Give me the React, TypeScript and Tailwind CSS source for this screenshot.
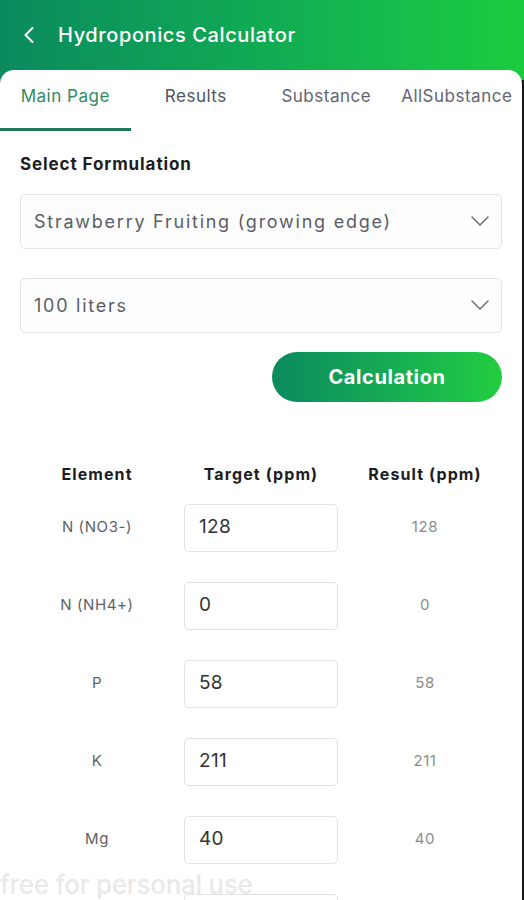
import React from 'react';
import { ChevronLeft, ChevronDown } from 'lucide-react';

const tabs = ['Main Page', 'Results', 'Substance', 'AllSubstance'];

const rows = [
  { name: 'N (NO3-)', target: '128', result: '128' },
  { name: 'N (NH4+)', target: '0', result: '0' },
  { name: 'P', target: '58', result: '58' },
  { name: 'K', target: '211', result: '211' },
  { name: 'Mg', target: '40', result: '40' },
  { name: '', target: '', result: '' },
];

const Select: React.FC<{ value: string }> = ({ value }) => (
  <div className="flex items-center justify-between h-[55px] pl-[13px] pr-[5px] border border-[#e2e4e8] rounded-[5px] bg-[#fdfdfd]">
    <span className="text-[18px] text-[#5a5d66] tracking-[1.75px]">{value}</span>
    <ChevronDown size={32} strokeWidth={1.1} className="text-[#6b6e76]" />
  </div>
);

export default function App() {
  return (
    <div
      className="relative h-[900px] overflow-hidden bg-[#161616]"
      style={{ fontFamily: 'Inter, "Open Sans", sans-serif' }}
    >
      <div className="h-[80px] bg-gradient-to-r from-[#0b8a5d] to-[#1bcd3d] flex items-start pt-[21px] pl-[15px] gap-[15px]">
        <ChevronLeft size={28} strokeWidth={1.7} className="text-white" />
        <span className="text-white text-[20px] font-medium tracking-[0.6px] leading-[28px]">Hydroponics Calculator</span>
      </div>

      <div className="-mt-[10px] mr-[2px] bg-white rounded-t-[14px] h-[840px]">
        <div className="grid grid-cols-4 h-[61px]">
          {tabs.map((t, i) => (
            <div key={t} className="flex flex-col">
              <div
                className={`flex-1 flex items-center justify-center pb-[4px] text-[17px] tracking-[0.5px] ${
                  i === 0 ? 'text-[#2d8c66]' : i === 1 ? 'text-[#4f5566]' : 'text-[#62656f]'
                }`}
              >
                {t}
              </div>
              <div className={`h-[3px] ${i === 0 ? 'bg-[#1a7b56]' : 'bg-transparent'}`} />
            </div>
          ))}
        </div>

        <div className="px-[20px]">
          <div className="mt-[21px] text-[17px] font-bold text-[#1d1d1f] tracking-[0.9px]">Select Formulation</div>
          <div className="mt-[16px]">
            <Select value="Strawberry Fruiting (growing edge)" />
          </div>
          <div className="mt-[29px]">
            <Select value="100 liters" />
          </div>
          <div className="mt-[19px] flex justify-end">
            <button className="w-[230px] h-[50px] rounded-full bg-gradient-to-r from-[#0b8a5d] to-[#22cd3e] text-white text-[20px] font-bold tracking-[0.6px]">
              Calculation
            </button>
          </div>

          <div className="mt-[60px] grid grid-cols-[154px_1fr_154px] text-[16px] font-bold text-[#1d1d1f] text-center tracking-[1.1px]">
            <div>Element</div>
            <div>Target (ppm)</div>
            <div>Result (ppm)</div>
          </div>

          <div className="mt-[18px] flex flex-col gap-[30px]">
            {rows.map((r, i) => (
              <div key={i} className="grid grid-cols-[154px_1fr_154px] items-center h-[48px]">
                <div className="text-center text-[15px] text-[#5c5f66] tracking-[0.6px]">{r.name}</div>
                <div className="flex justify-center">
                  <div className="w-[154px] h-[48px] border border-[#e0e2e6] rounded-[5px] flex items-center px-[14px] text-[19px] text-[#333] tracking-[0.3px]">
                    {r.target}
                  </div>
                </div>
                <div className="text-center text-[15px] text-[#8a8c92] tracking-[0.6px]">{r.result}</div>
              </div>
            ))}
          </div>
        </div>
      </div>

      <div className="absolute left-0 top-[865px] text-[26px] font-medium text-[#e6e6e6]/90 tracking-[-0.3px]">
        free for personal use
      </div>
    </div>
  );
}
